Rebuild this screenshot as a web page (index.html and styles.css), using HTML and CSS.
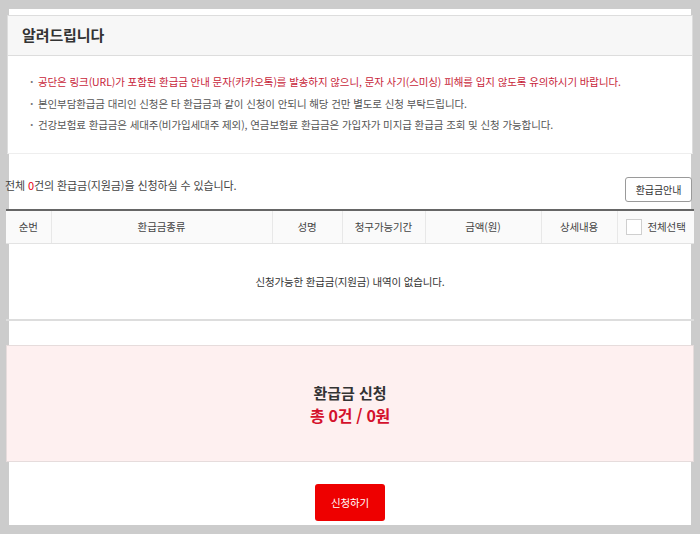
FILE: index.html
```html
<!DOCTYPE html>
<html lang="ko">
<head>
<meta charset="utf-8">
<title>환급금 신청</title>
<link rel="stylesheet" href="styles.css">
</head>
<body>
<div class="panel">
  <div class="inner">
    <section class="notice">
      <h2 class="notice-title">알려드립니다</h2>
      <ul class="notice-list">
        <li class="warn">공단은 링크(URL)가 포함된 환급금 안내 문자(카카오톡)를 발송하지 않으니, 문자 사기(스미싱) 피해를 입지 않도록 유의하시기 바랍니다.</li>
        <li>본인부담환급금 대리인 신청은 타 환급금과 같이 신청이 안되니 해당 건만 별도로 신청 부탁드립니다.</li>
        <li>건강보험료 환급금은 세대주(비가입세대주 제외), 연금보험료 환급금은 가입자가 미지급 환급금 조회 및 신청 가능합니다.</li>
      </ul>
    </section>

    <div class="countbar">
      <p class="count">전체 <em>0</em>건의 환급금(지원금)을 신청하실 수 있습니다.</p>
      <button class="btn-guide" type="button">환급금안내</button>
    </div>

    <table class="list">
      <colgroup>
        <col class="c1"><col class="c2"><col class="c3"><col class="c4"><col class="c5"><col class="c6"><col class="c7">
      </colgroup>
      <thead>
        <tr>
          <th>순번</th>
          <th>환급금종류</th>
          <th>성명</th>
          <th>청구가능기간</th>
          <th>금액(원)</th>
          <th>상세내용</th>
          <th class="th-check"><label class="check"><span class="box"></span>전체선택</label></th>
        </tr>
      </thead>
      <tbody>
        <tr><td class="empty" colspan="7">신청가능한 환급금(지원금) 내역이 없습니다.</td></tr>
      </tbody>
    </table>

    <div class="summary">
      <p class="sum-title">환급금 신청</p>
      <p class="sum-total">총 0건 / 0원</p>
    </div>

    <div class="actions">
      <button class="btn-apply" type="button">신청하기</button>
    </div>
  </div>
</div>
</body>
</html>
```

FILE: styles.css
```css
* { box-sizing: border-box; }
html, body { margin: 0; padding: 0; }
body {
  background: #cccccc;
  font-family: "Noto Sans CJK KR", "Noto Sans", sans-serif;
  color: #333;
  height: 534px;
  overflow: hidden;
}
.panel {
  margin: 9px 0 0 9px;
  width: 682px;
  height: 516px;
  background: #fff;
}
.inner {
  margin-left: -3px;
  width: 688px;
  padding-top: 6px;
}
.notice {
  margin-left: 1px;
  width: 686px;
  border: 1px solid #dddddd;
  border-bottom-color: #eeeeee;
  background: #fff;
}
.notice-title {
  margin: 0;
  height: 40px;
  line-height: 38px;
  padding-left: 14px;
  background: #f7f7f7;
  border-bottom: 1px solid #dddddd;
  font-size: 15px;
  font-weight: 700;
  letter-spacing: -0.1px;
  color: #333;
}
.notice-list {
  list-style: none;
  margin: 0;
  padding: 15px 0 17px 22px;
}
.notice-list li {
  position: relative;
  padding-left: 8px;
  font-size: 10.5px;
  line-height: 21.5px;
  letter-spacing: -0.1px;
  color: #555;
  white-space: nowrap;
}
.notice-list li::before {
  content: "·";
  position: absolute;
  left: 0;
  top: 0;
  font-weight: 700;
  color: #777;
}
.notice-list li.warn { color: #c81e3a; }
.countbar {
  display: flex;
  justify-content: space-between;
  align-items: flex-start;
  margin-top: 23px;
}
.count {
  margin: 0 0 0 -1px;
  font-size: 11px;
  line-height: 17px;
  letter-spacing: -0.1px;
  color: #444;
}
.count em { font-style: normal; color: #e60012; }
.btn-guide {
  width: 67px;
  height: 25px;
  margin-right: 2px;
  padding: 0;
  border: 1px solid #9a9a9a;
  border-radius: 3px;
  background: #fff;
  font-family: inherit;
  font-size: 10px;
  letter-spacing: -0.1px;
  color: #333;
}
.list {
  margin-top: 7px;
  width: 688px;
  border-collapse: collapse;
  table-layout: fixed;
  border-top: 2px solid #666;
}
.c1 { width: 45px; }
.c2 { width: 221px; }
.c3 { width: 70px; }
.c4 { width: 83px; }
.c5 { width: 116px; }
.c6 { width: 76px; }
.c7 { width: 77px; }
.list th {
  height: 34px;
  padding: 0;
  background: #fafafa;
  border-bottom: 1px solid #e3e3e3;
  border-left: 1px solid #e8e8e8;
  font-size: 10.5px;
  font-weight: 400;
  letter-spacing: -0.1px;
  color: #444;
  text-align: center;
}
.list th:first-child { border-left: 0; }
.th-check { text-align: left; }
.check {
  display: flex;
  align-items: center;
  padding-left: 8px;
  gap: 6px;
}
.box {
  display: inline-block;
  width: 16px;
  height: 16px;
  border: 1px solid #cfcfcf;
  background: #fff;
}
.empty {
  height: 76px;
  padding: 0;
  border-bottom: 2px solid #dddddd;
  text-align: center;
  font-size: 10.5px;
  letter-spacing: -0.15px;
  color: #333;
}
.summary {
  margin-top: 24px;
  height: 117px;
  border: 1px solid #e6dcdc;
  background: #fef0f0;
  display: flex;
  flex-direction: column;
  align-items: center;
  justify-content: center;
  padding-top: 1px;
}
.summary p { margin: 0; line-height: 23px; }
.sum-title {
  font-size: 15px;
  font-weight: 700;
  letter-spacing: 0;
  color: #333;
}
.sum-total {
  font-size: 16px;
  font-weight: 700;
  letter-spacing: -0.3px;
  color: #d4112c;
}
.actions {
  display: flex;
  justify-content: center;
  margin-top: 22px;
}
.btn-apply {
  width: 70px;
  height: 37px;
  padding: 0;
  border: 0;
  border-radius: 3px;
  background: #ee0000;
  color: #fff;
  font-family: inherit;
  font-size: 10.5px;
  letter-spacing: -0.1px;
}
```
